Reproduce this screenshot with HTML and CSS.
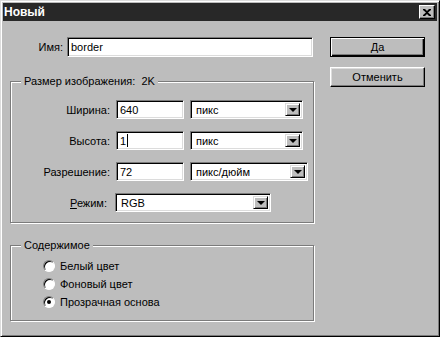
FILE: index.html
```html
<!DOCTYPE html>
<html lang="ru">
<head>
<meta charset="utf-8">
<title>Новый</title>
<link rel="stylesheet" href="styles.css">
</head>
<body>
<div class="window">
  <div class="titlebar">
    <span class="title">Новый</span>
    <span class="close"><svg width="8" height="7" viewBox="0 0 8 7"><path d="M0 0h2l2 2 2-2h2v1L5 3.5 8 6v1H6L4 5 2 7H0V6l3-2.5L0 1z" fill="#000"/></svg></span>
  </div>
  <div class="body">
    <div class="left">
      <div class="name-row">
        <span class="name-label">Имя:</span>
        <div class="field name-field">border</div>
      </div>
      <fieldset class="group size-group">
        <legend>Размер изображения:&nbsp; 2K</legend>
        <div class="grid">
          <span class="lbl">Ширина:</span>
          <div class="field num">640</div>
          <div class="combo w113"><span class="combo-text">пикс</span><span class="drop"><i class="tri"></i></span></div>

          <span class="lbl">Высота:</span>
          <div class="field num">1<i class="caret"></i></div>
          <div class="combo w113"><span class="combo-text">пикс</span><span class="drop"><i class="tri"></i></span></div>

          <span class="lbl">Разрешение:</span>
          <div class="field num">72</div>
          <div class="combo w118"><span class="combo-text">пикс/дюйм</span><span class="drop"><i class="tri"></i></span></div>

          <span class="lbl mode-lbl"><u>Р</u>ежим:</span>
          <div class="combo mode"><span class="combo-text">RGB</span><span class="drop"><i class="tri"></i></span></div>
        </div>
      </fieldset>
      <fieldset class="group content-group">
        <legend>Содержимое</legend>
        <div class="radios">
          <div class="radio-row"><span class="radio"></span><span>Белый цвет</span></div>
          <div class="radio-row"><span class="radio"></span><span>Фоновый цвет</span></div>
          <div class="radio-row"><span class="radio checked"></span><span>Прозрачная основа</span></div>
        </div>
      </fieldset>
    </div>
    <div class="right">
      <button class="btn default">Да</button>
      <button class="btn">Отменить</button>
    </div>
  </div>
</div>
</body>
</html>
```
FILE: styles.css
```css
html, body {
  margin: 0;
  padding: 0;
  background: #bdbdbd;
}
body {
  font-family: "Liberation Sans", Arial, sans-serif;
  font-size: 11px;
  color: #000;
}
.window {
  width: 440px;
  height: 337px;
  box-sizing: border-box;
  background: #bdbdbd;
  border: 1px solid;
  border-color: #dcdcdc #000 #000 #dcdcdc;
  box-shadow: inset 1px 1px 0 #fff, inset -1px -1px 0 #7b7b7b;
  padding: 2px;
}
.titlebar {
  height: 18px;
  background: #282828;
  display: flex;
  align-items: center;
  justify-content: space-between;
  padding: 0 2px 0 1px;
}
.title {
  color: #fff;
  font-weight: bold;
  font-size: 12px;
}
.close {
  width: 16px;
  height: 14px;
  box-sizing: border-box;
  background: #bdbdbd;
  border: 1px solid;
  border-color: #fff #000 #000 #fff;
  box-shadow: inset -1px -1px 0 #7b7b7b;
  display: flex;
  align-items: center;
  justify-content: center;
}
.body {
  display: flex;
  padding: 16px 0 0 7px;
  gap: 16px;
}
.left {
  width: 304px;
  display: flex;
  flex-direction: column;
}
.name-row {
  display: flex;
  align-items: center;
  height: 20px;
}
.name-label {
  width: 53px;
  text-align: right;
  margin-right: 4px;
}
.field {
  box-sizing: border-box;
  background: #fff;
  border: 1px solid;
  border-color: #7b7b7b #fff #fff #7b7b7b;
  box-shadow: inset 1px 1px 0 #000, inset -1px -1px 0 #dcdcdc;
  padding: 0 3px;
  display: flex;
  align-items: center;
  height: 19px;
}
.name-field {
  width: 246px;
  height: 20px;
}
.group {
  margin: 0;
  box-sizing: border-box;
  width: 304px;
  border: 1px solid #7b7b7b;
  box-shadow: 1px 1px 0 #fff, inset 1px 1px 0 #fff;
  padding: 12px 4px 10px 4px;
  min-width: 0;
}
.group legend {
  margin-left: 6px;
  padding: 0 3px;
  line-height: 14px;
  background: #bdbdbd;
}
.size-group {
  margin-top: 17px;
}
.grid {
  display: grid;
  grid-template-columns: 95px 68px auto;
  column-gap: 6px;
  row-gap: 12px;
  grid-auto-rows: 19px;
  align-items: center;
}
.lbl {
  text-align: right;
}
.mode-lbl {
  padding-right: 3px;
}
.num {
  width: 68px;
}
.caret {
  display: inline-block;
  width: 1px;
  height: 13px;
  background: #000;
  margin-left: 1px;
}
.combo {
  box-sizing: border-box;
  height: 19px;
  background: #fff;
  border: 1px solid;
  border-color: #7b7b7b #fff #fff #7b7b7b;
  box-shadow: inset 1px 1px 0 #000, inset -1px -1px 0 #dcdcdc;
  display: flex;
  align-items: stretch;
  padding: 2px;
}
.w113 { width: 113px; }
.w118 { width: 118px; }
.mode {
  grid-column: 2 / span 2;
  width: 156px;
  margin-left: -1px;
}
.combo-text {
  flex: 1;
  display: flex;
  align-items: center;
  padding-left: 3px;
}
.drop {
  width: 15px;
  box-sizing: border-box;
  background: #bdbdbd;
  border: 1px solid;
  border-color: #dcdcdc #000 #000 #dcdcdc;
  box-shadow: inset 1px 1px 0 #fff, inset -1px -1px 0 #7b7b7b;
  display: flex;
  align-items: center;
  justify-content: center;
}
.tri {
  width: 0;
  height: 0;
  border-left: 4px solid transparent;
  border-right: 4px solid transparent;
  border-top: 4px solid #000;
}
.content-group {
  margin-top: 15px;
  padding: 5px 4px 9px 4px;
}
.radios {
  display: flex;
  flex-direction: column;
  padding-left: 28px;
}
.radio-row {
  height: 18px;
  display: flex;
  align-items: center;
  gap: 5px;
}
.radio {
  width: 12px;
  height: 12px;
  box-sizing: border-box;
  border-radius: 50%;
  background: #fff;
  border: 1px solid;
  border-color: #7b7b7b #fff #fff #7b7b7b;
  box-shadow: inset 1px 1px 0 #000;
  display: flex;
  align-items: center;
  justify-content: center;
}
.radio.checked::after {
  content: "";
  width: 4px;
  height: 4px;
  border-radius: 50%;
  background: #000;
}
.right {
  display: flex;
  flex-direction: column;
  gap: 10px;
}
.btn {
  width: 95px;
  height: 20px;
  box-sizing: border-box;
  font-family: "Liberation Sans", Arial, sans-serif;
  font-size: 11px;
  color: #000;
  background: #bdbdbd;
  border: 1px solid;
  border-color: #fff #000 #000 #fff;
  box-shadow: inset -1px -1px 0 #7b7b7b, inset 1px 1px 0 #dcdcdc;
  padding: 0;
  margin: 0;
}
.btn.default {
  border: 1px solid #000;
  box-shadow: inset 1px 1px 0 #fff, inset -1px -1px 0 #000, inset -2px -2px 0 #7b7b7b;
}
```
